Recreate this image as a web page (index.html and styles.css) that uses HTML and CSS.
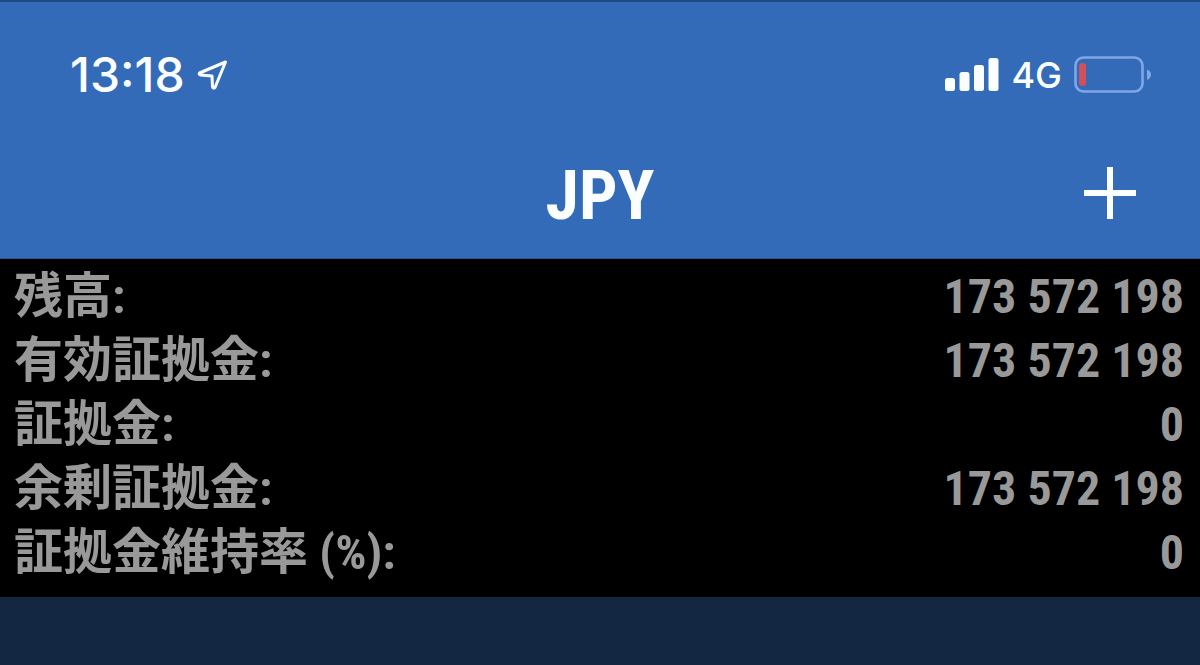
FILE: index.html
```html
<!DOCTYPE html>
<html lang="ja">
<head>
<meta charset="utf-8">
<meta name="viewport" content="width=device-width, initial-scale=1">
<title>JPY</title>
<link rel="stylesheet" href="styles.css">
</head>
<body>
<header class="header">
  <div class="status">
    <div class="status-left">
      <time class="clock">13:18</time>
      <svg class="location" width="32" height="32" viewBox="0 0 32 32" aria-hidden="true">
        <path d="M2.500 14 L28.500 3 L18 28.500 Q16.500 30 15.500 28 L15 17 L3.500 16 Q1.500 15 2.500 14 Z" fill="none" stroke="currentColor" stroke-width="3" stroke-linejoin="round"/>
      </svg>
    </div>
    <div class="status-right">
      <svg class="signal" width="54" height="34" viewBox="0 0 54 34" aria-hidden="true">
        <g fill="currentColor">
          <rect x="0" y="20" width="10" height="13" rx="2.500"/>
          <rect x="14.500" y="14" width="10" height="19" rx="2.500"/>
          <rect x="29" y="7" width="10" height="26" rx="2.500"/>
          <rect x="43.500" y="0" width="10" height="33" rx="2.500"/>
        </g>
      </svg>
      <span class="network">4G</span>
      <svg class="battery" width="78" height="38" viewBox="0 0 78 38" aria-hidden="true">
        <rect x="1.500" y="1.500" width="67" height="34" rx="8" fill="none" stroke="#7fa8e6" stroke-width="2.600"/>
        <path d="M73 13.500 Q77 15 77 18.500 Q77 22 73 24 Z" fill="#7fa8e6"/>
        <rect x="5" y="7" width="7" height="23" rx="3" fill="#d2505c"/>
      </svg>
    </div>
  </div>
  <div class="nav">
    <h1 class="title">JPY</h1>
    <button class="add" type="button" aria-label="追加">
      <svg width="52" height="54" viewBox="0 0 52 54" aria-hidden="true">
        <path d="M0 26 H52 M26 0 V52" fill="none" stroke="currentColor" stroke-width="6"/>
      </svg>
    </button>
  </div>
</header>
<main class="account">
  <dl class="rows">
    <div class="row"><dt>残高:</dt><dd>173 572 198</dd></div>
    <div class="row"><dt>有効証拠金:</dt><dd>173 572 198</dd></div>
    <div class="row"><dt>証拠金:</dt><dd>0</dd></div>
    <div class="row"><dt>余剰証拠金:</dt><dd>173 572 198</dd></div>
    <div class="row"><dt>証拠金維持率 (%):</dt><dd>0</dd></div>
  </dl>
</main>
</body>
</html>
```
FILE: styles.css
```css
* {
  box-sizing: border-box;
}

body {
  margin: 0;
  min-height: 100vh;
  background: #132642;
  font-family: "Roboto Condensed", Roboto, "Noto Sans CJK JP", sans-serif;
}

.header {
  background: #346bb9;
  border-top: 2px solid #1f4a86;
  border-bottom: 1px solid #28528f;
  color: #fafeff;
}

.status {
  display: flex;
  justify-content: space-between;
  align-items: center;
  height: 128px;
  padding: 17px 48px 0 70px;
}

.status-left,
.status-right {
  display: flex;
  align-items: center;
  gap: 12px;
}

.clock {
  font: 500 48px/48px Inter, sans-serif;
}

.network {
  font: 500 36px/40px Inter, sans-serif;
}

.nav {
  display: grid;
  grid-template-columns: 1fr auto 1fr;
  align-items: center;
  height: 128px;
  padding: 0 64px;
}

.title {
  grid-column: 2;
  margin: 0;
  padding-top: 4px;
  font-size: 68px;
  line-height: 80px;
  font-weight: 700;
}

.add {
  display: flex;
  justify-self: end;
  padding: 0;
  border: 0;
  background: none;
  color: inherit;
}

.account {
  padding: 6px 16px 12px 14px;
  background: #000;
  color: #999;
}

.rows {
  margin: 0;
}

.row {
  display: flex;
  justify-content: space-between;
  align-items: baseline;
  height: 64px;
  font-size: 49px;
  line-height: 64px;
  font-weight: 700;
}

.row dd {
  margin: 0;
  font-size: 48px;
}
```
